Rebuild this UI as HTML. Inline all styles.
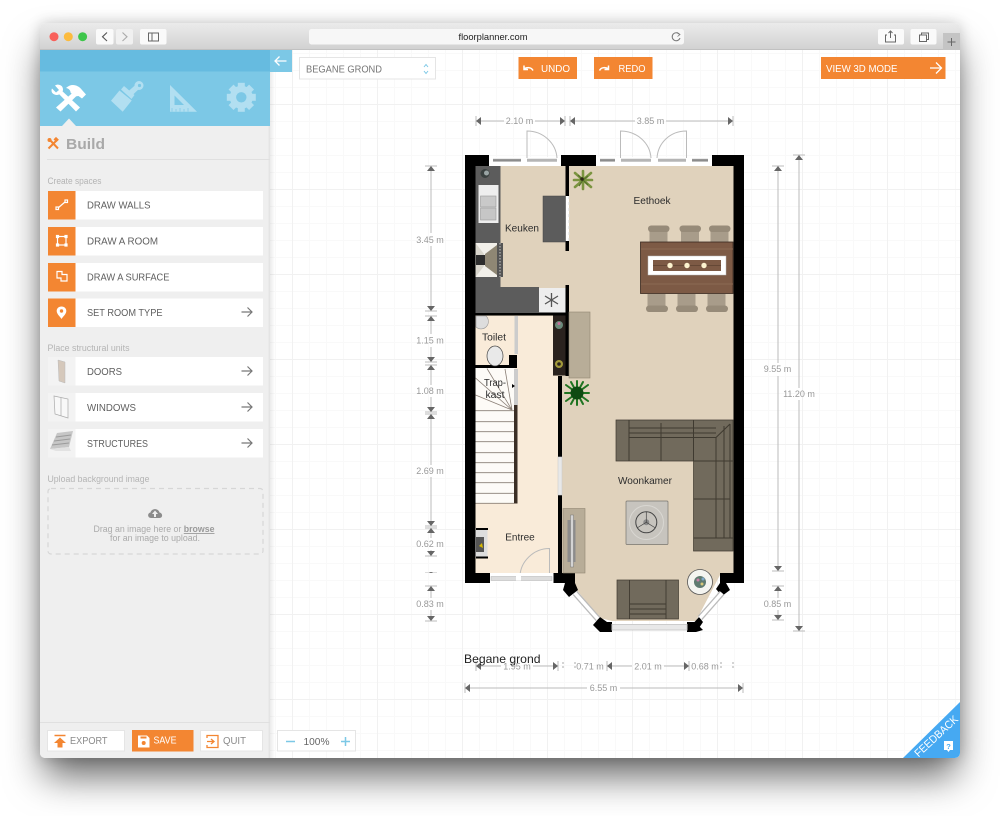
<!DOCTYPE html>
<html><head><meta charset="utf-8">
<style>
html,body{margin:0;padding:0;background:#fff;width:1000px;height:816px;overflow:hidden}
#shadow{position:absolute;left:40px;top:23px;width:920px;height:735px;border-radius:5px;box-shadow:0 22px 38px -4px rgba(0,0,0,.6),0 0 14px rgba(0,0,0,.18)}
svg{position:absolute;left:0;top:0}
text{font-family:"Liberation Sans",sans-serif}
.s{fill:#5f5f5f;font-size:10.5px}
.l{fill:#b4b4b4;font-size:9px}
.d{fill:#999;font-size:9px;text-anchor:middle}
.r{fill:#2c2c2c;font-size:10.5px;text-anchor:middle}
.w{fill:#fff;font-size:10.5px}
</style></head><body>
<div id="shadow"></div>
<svg width="1000" height="816" viewBox="0 0 1000 816" xmlns="http://www.w3.org/2000/svg">
<defs>
<clipPath id="win"><rect x="40" y="23" width="920" height="735" rx="5"/></clipPath>
<linearGradient id="tb" x1="0" y1="0" x2="0" y2="1"><stop offset="0" stop-color="#ebebeb"/><stop offset="1" stop-color="#d0d0d0"/></linearGradient>
<linearGradient id="sh" x1="0" y1="0" x2="1" y2="0"><stop offset="0" stop-color="#000" stop-opacity=".08"/><stop offset="1" stop-color="#000" stop-opacity="0"/></linearGradient>
<pattern id="minor" x="3" y="2" width="17" height="17" patternUnits="userSpaceOnUse"><path d="M.5 0V17M0 .5H17" stroke="#f9f9f9" fill="none"/></pattern>
<pattern id="major" x="37" y="19" width="85" height="85" patternUnits="userSpaceOnUse"><path d="M.5 0V85M0 .5H85" stroke="#f1f1f1" fill="none"/></pattern>
<g id="up"><path d="M-6 0H6" stroke="#bbb"/><path d="M-4 5L0 0L4 5Z" fill="#666"/></g>
<g id="dn"><path d="M-6 0H6" stroke="#bbb"/><path d="M-4 -5L0 0L4 -5Z" fill="#666"/></g>
<g id="lf"><path d="M0 -5V5" stroke="#bbb"/><path d="M5 -4L0 0L5 4Z" fill="#666"/></g>
<g id="rt"><path d="M0 -5V5" stroke="#bbb"/><path d="M-5 -4L0 0L-5 4Z" fill="#666"/></g>
<g id="arr"><path d="M0 0H10M6 -4.500L10.500 0L6 4.500" fill="none" stroke="#777" stroke-width="1.200"/></g>
<g id="chT"><rect x="1.500" y="4" width="18" height="13" fill="#a89c8a"/><rect x="0" y="0" width="21.500" height="6.500" rx="3.200" fill="#978b79"/></g>
<g id="chB"><rect x="1.500" y="0" width="18" height="13" fill="#a89c8a"/><rect x="0" y="11.500" width="22" height="6.500" rx="3.200" fill="#978b79"/></g>
</defs>

<g clip-path="url(#win)">
<!-- title bar -->
<rect x="40" y="23" width="920" height="28" fill="url(#tb)"/>
<rect x="40" y="49.500" width="920" height="1" fill="#b0b0b0"/>
<circle cx="54" cy="36.700" r="4.500" fill="#f8605a"/>
<circle cx="68.300" cy="36.700" r="4.500" fill="#fcbb3e"/>
<circle cx="82.600" cy="36.700" r="4.500" fill="#3ec64b"/>
<rect x="96" y="29" width="17.500" height="15.500" rx="2" fill="#fafafa"/>
<rect x="116" y="29" width="17" height="15.500" rx="2" fill="#f0f0f0"/>
<path d="M107 32.500L102.500 36.800L107 41" fill="none" stroke="#555" stroke-width="1.100"/>
<path d="M122.500 32.500L127 36.800L122.500 41" fill="none" stroke="#aaa" stroke-width="1.100"/>
<rect x="140" y="29" width="26.500" height="15.500" rx="2" fill="#fafafa"/>
<rect x="148.500" y="33" width="10" height="8" fill="none" stroke="#666"/><path d="M152 33V41" stroke="#666"/>
<rect x="309" y="29" width="375" height="15.500" rx="2.500" fill="#f7f7f7"/>
<text x="493" y="40" text-anchor="middle" font-size="9.500" fill="#222" textLength="69" lengthAdjust="spacingAndGlyphs">floorplanner.com</text>
<path d="M679.500 34.500A4 4 0 1 0 680 38" fill="none" stroke="#777"/><path d="M677 32.500L680 34.500L677.500 36.500" fill="none" stroke="#777" stroke-width=".8"/>
<rect x="878" y="29" width="26" height="15.500" rx="2" fill="#fafafa"/>
<path d="M887 35H885.500V42H895.500V35H894M890.500 38V31M888.500 33L890.500 31L892.500 33" fill="none" stroke="#666"/>
<rect x="910.500" y="29" width="26" height="15.500" rx="2" fill="#fafafa"/>
<rect x="919.500" y="35" width="7" height="6.500" fill="none" stroke="#666"/><path d="M921.500 35V33H928.500V39.500H926.500" fill="none" stroke="#666"/>
<rect x="943" y="33" width="17" height="17" fill="#c4c4c4"/>
<path d="M947.500 42H955.500M951.500 38V46" stroke="#666"/>

<!-- canvas -->
<rect x="270" y="50" width="690" height="708" fill="#fff"/>
<rect x="270" y="50" width="690" height="708" fill="url(#minor)"/>
<rect x="270" y="50" width="690" height="708" fill="url(#major)"/>
<rect x="270" y="50" width="5" height="708" fill="url(#sh)"/>

<!-- sidebar -->
<rect x="40" y="50" width="230" height="708" fill="#efefef"/>
<rect x="268.500" y="126" width="1.500" height="632" fill="#e4e4e4"/>
<rect x="40" y="50" width="230" height="22" fill="#66bbe0"/>
<rect x="40" y="71.500" width="230" height="54.500" fill="#7cc8e6"/>
<path d="M62 126L69 118.500L76 126Z" fill="#efefef"/>

<!-- tool icons -->
<g fill="#fff">
<path d="M57.500 92.500L60.500 89.500L80 107.500L76 111.500Z"/>
<path d="M52 88.500L56 92.500L59 90L55 85.500C58 83.500 63 85 63 89.500C63 93.500 58 96 54.500 94.500C51.500 93.500 51 90.500 52 88.500Z"/>
<path d="M74 91.500L77.500 95L60.500 111.500L56 107.500Z"/>
<path d="M66 88C71 83 78 84.500 82 90L86 94.500L82 98.500L78.500 96L74.500 96.500L70.500 92.500C70.500 90.500 69 88.500 66 88Z"/>
</g>
<g fill="#b2dff1">
<path d="M111 100.700L119.500 90.500L131.700 100.500L122.700 111.700Z"/>
<path d="M121 89.500L124 86L134.500 95L131.500 99Z"/>
<path d="M127.500 92L136.500 84L140 88L131 96.500Z"/>
<circle cx="139" cy="85.500" r="4.500"/>
<path fill-rule="evenodd" d="M170 85V111.700H197ZM174.500 95.500V105H184Z"/>
</g>
<circle cx="139.500" cy="85.500" r="1.600" fill="#7cc8e6"/>
<path d="M172 111.500V108M176 111.500V109M180 111.500V108M184 111.500V109M188 111.500V108" stroke="#7cc8e6" stroke-width=".7"/>
<g transform="translate(241.300 97.300)" fill="#b2dff1">
<circle r="11.500"/>
<rect x="-3.500" y="-14.500" width="7" height="29"/>
<rect x="-3.500" y="-14.500" width="7" height="29" transform="rotate(45)"/>
<rect x="-3.500" y="-14.500" width="7" height="29" transform="rotate(90)"/>
<rect x="-3.500" y="-14.500" width="7" height="29" transform="rotate(135)"/>
<circle r="5.200" fill="#7cc8e6"/>
</g>

<!-- build header -->
<path d="M48.500 148.500L58 139M49 139L58 148.500" stroke="#f38632" stroke-width="2" fill="none"/>
<circle cx="49.500" cy="140" r="2" fill="#f38632"/><rect x="54.500" y="137.500" width="4" height="3.500" fill="#f38632" transform="rotate(45 56 139)"/>
<text x="66" y="149" font-size="15" font-weight="bold" fill="#a9a9a9" textLength="39" lengthAdjust="spacingAndGlyphs">Build</text>
<rect x="47" y="159" width="223" height="1" fill="#e0e0e0"/>

<text x="47.500" y="184" class="l" textLength="54" lengthAdjust="spacingAndGlyphs">Create spaces</text>
<!-- buttons -->
<g fill="#fff">
<rect x="48" y="191" width="215" height="28.500"/>
<rect x="48" y="227" width="215" height="28.500"/>
<rect x="48" y="263" width="215" height="28.500"/>
<rect x="48" y="298.500" width="215" height="28.500"/>
<rect x="48" y="357" width="215" height="28.500"/>
<rect x="48" y="393" width="215" height="28.500"/>
<rect x="48" y="429" width="215" height="28.500"/>
</g>
<g fill="#f38632">
<rect x="48" y="191" width="27.500" height="28.500"/>
<rect x="48" y="227" width="27.500" height="28.500"/>
<rect x="48" y="263" width="27.500" height="28.500"/>
<rect x="48" y="298.500" width="27.500" height="28.500"/>
</g>
<g fill="none" stroke="#fff" stroke-width="1.200">
<path d="M58 208L65 202"/><rect x="56" y="207" width="2.500" height="2.500"/><rect x="65" y="200" width="2.500" height="2.500"/>
<rect x="57.500" y="236.500" width="8.500" height="8.500"/>
<rect x="56.500" y="235.500" width="2" height="2" fill="#fff"/><rect x="65" y="235.500" width="2" height="2" fill="#fff"/><rect x="56.500" y="244" width="2" height="2" fill="#fff"/><rect x="65" y="244" width="2" height="2" fill="#fff"/>
<path d="M57 271.500H62V274.500H67V281H61V278H57Z"/>
</g>
<path d="M61.500 306.500C58.500 306.500 56.700 308.500 56.700 311C56.700 314 60 316.500 61.500 319C63 316.500 66.300 314 66.300 311C66.300 308.500 64.500 306.500 61.500 306.500Z" fill="#fff"/>
<circle cx="61.500" cy="311" r="1.700" fill="#f38632"/>

<text x="87" y="208.500" class="s" textLength="63.500" lengthAdjust="spacingAndGlyphs">DRAW WALLS</text>
<text x="87" y="244.500" class="s" textLength="71" lengthAdjust="spacingAndGlyphs">DRAW A ROOM</text>
<text x="87" y="280.500" class="s" textLength="82.500" lengthAdjust="spacingAndGlyphs">DRAW A SURFACE</text>
<text x="87" y="316" class="s" textLength="75.500" lengthAdjust="spacingAndGlyphs">SET ROOM TYPE</text>
<use href="#arr" x="241.500" y="312"/>

<text x="47.500" y="351" class="l" textLength="82" lengthAdjust="spacingAndGlyphs">Place structural units</text>
<rect x="48" y="357" width="27.500" height="28.500" fill="#f3f3f3"/>
<rect x="48" y="393" width="27.500" height="28.500" fill="#f3f3f3"/>
<rect x="48" y="429" width="27.500" height="28.500" fill="#f3f3f3"/>
<path d="M58 360L65 362V383L59 381Z" fill="#d5c8bb" stroke="#bbb" stroke-width=".5"/>
<path d="M54 396L68 399V418L55 414Z" fill="#f8f8f8" stroke="#aaa" stroke-width=".7"/><path d="M61 397.500V416" stroke="#aaa" stroke-width=".7"/>
<path d="M57 433L73 431L69 447L50 449Z" fill="#c6c6c6"/><path d="M56 437L71 435M54 441L70 439M52 445L69 443" stroke="#9b9b9b"/><path d="M50 449L69 447L71 451H56Z" fill="#e2e2e2"/>
<text x="87" y="375" class="s" textLength="35" lengthAdjust="spacingAndGlyphs">DOORS</text>
<text x="87" y="411" class="s" textLength="49" lengthAdjust="spacingAndGlyphs">WINDOWS</text>
<text x="87" y="447" class="s" textLength="61" lengthAdjust="spacingAndGlyphs">STRUCTURES</text>
<use href="#arr" x="241.500" y="371"/>
<use href="#arr" x="241.500" y="407"/>
<use href="#arr" x="241.500" y="443"/>

<text x="47.500" y="482" class="l" textLength="102" lengthAdjust="spacingAndGlyphs">Upload background image</text>
<rect x="48" y="488.500" width="215" height="65.500" rx="3" fill="none" stroke="#d6d6d6" stroke-width="1.200" stroke-dasharray="5 4"/>
<path d="M151 518C147.500 518 147 513 150.500 512.500C151.500 508 158.500 508 159.500 512.500C163 513 163 518 159.500 518Z" fill="#8c8c8c"/>
<path d="M155 510.500L152 514H154V517H156V514H158Z" fill="#efefef"/>
<text x="93.500" y="532" font-size="8.800" fill="#aaa" textLength="121" lengthAdjust="spacingAndGlyphs">Drag an image here or <tspan font-weight="bold" text-decoration="underline" fill="#9a9a9a">browse</tspan></text>
<text x="110" y="541" font-size="8.800" fill="#aaa" textLength="90" lengthAdjust="spacingAndGlyphs">for an image to upload.</text>

<!-- bottom bar -->
<rect x="40" y="722" width="230" height="1" fill="#e0e0e0"/>
<rect x="47.500" y="730.500" width="77" height="20.500" fill="#fff" stroke="#e5e5e5"/>
<rect x="132" y="730" width="61.500" height="21.500" fill="#f38632"/>
<rect x="200.500" y="730.500" width="62" height="20.500" fill="#fff" stroke="#e5e5e5"/>
<path d="M54.500 735.500H65.500" stroke="#f38632" stroke-width="1.500"/>
<path d="M60 737.500L66 743H62.500V747.500H57.500V743H54Z" fill="#f38632"/>
<text x="70" y="744" class="s" style="fill:#8a8a8a" textLength="37.500" lengthAdjust="spacingAndGlyphs">EXPORT</text>
<path d="M138 735.500H147L149.500 738V747.500H138Z" fill="#fff"/>
<rect x="140.500" y="736.500" width="6" height="2" fill="#f38632"/><circle cx="143.700" cy="743" r="2" fill="#f38632"/>
<text x="153.500" y="743.500" class="w" textLength="23" lengthAdjust="spacingAndGlyphs">SAVE</text>
<path d="M207 738V735.500H218V747.500H207V745M207 741.500H213.500M211 739L214 741.500L211 744" fill="none" stroke="#f38632" stroke-width="1.300"/>
<text x="223" y="744" class="s" style="fill:#8a8a8a" textLength="23" lengthAdjust="spacingAndGlyphs">QUIT</text>

<!-- zoom -->
<rect x="277.500" y="730.500" width="78" height="20.500" fill="#fff" stroke="#e5e5e5"/>
<path d="M286 741.500H295M341 741.500H350M345.500 737V746" stroke="#7cc8e6" stroke-width="1.500"/>
<text x="316.500" y="745" font-size="10.500" fill="#666" text-anchor="middle" textLength="26" lengthAdjust="spacingAndGlyphs">100%</text>

<!-- top controls -->
<rect x="270" y="50" width="22" height="22" fill="#7cc8e6"/>
<path d="M286.500 61H275M279.500 56.500L275 61L279.500 65.500" fill="none" stroke="#fff" stroke-width="1.300"/>
<rect x="299.500" y="57.500" width="136" height="21.500" fill="#fff" stroke="#e5e5e5"/>
<text x="306" y="72.500" class="s" style="fill:#777" textLength="76" lengthAdjust="spacingAndGlyphs">BEGANE GROND</text>
<path d="M424 67L426 64.500L428 67M424 71L426 73.500L428 71" fill="none" stroke="#7cc8e6"/>
<rect x="518.500" y="57" width="58.500" height="22" fill="#f38632"/>
<rect x="594" y="57" width="58.500" height="22" fill="#f38632"/>
<rect x="821" y="57" width="124.500" height="22" fill="#f38632"/>
<path d="M533 70.500C531.500 67.500 528 67 524.500 68.500M524 65.500V69.500H528" fill="none" stroke="#fff" stroke-width="1.500"/>
<path d="M599.500 70.500C601 67.500 604.500 67 608 68.500M608.500 65.500V69.500H604.500" fill="none" stroke="#fff" stroke-width="1.500"/>
<text x="541" y="72" class="w" textLength="29" lengthAdjust="spacingAndGlyphs">UNDO</text>
<text x="618.500" y="72" class="w" textLength="27" lengthAdjust="spacingAndGlyphs">REDO</text>
<text x="826" y="72" class="w" textLength="71.500" lengthAdjust="spacingAndGlyphs">VIEW 3D MODE</text>
<path d="M930 68H941M936 62.500L941.500 68L936 73.500" fill="none" stroke="#fff" stroke-width="1.300"/>

<!-- FLOOR PLAN -->
<path d="M475 166H733.500V575H720L696 621H612L600 618L575 588L562 575V376H553V316H475Z" fill="#e0d2bc"/>
<path d="M475 316H553V376H558V576H475Z" fill="#f9ebd9"/>
<!-- windows top -->
<rect x="489" y="157" width="72" height="9" fill="#fff"/>
<rect x="596" y="157" width="116" height="9" fill="#fff"/>
<path d="M493 160.300H521M527 160.300H557M600 160.300H615M621 160.300H651M658 160.300H686M692 160.300H708" stroke="#b5b5b5" stroke-width="3"/>
<path d="M493 160.300H521M600 160.300H615M692 160.300H708" stroke="#8c8c8c" stroke-width="2"/>
<!-- door arcs -->
<path d="M527 158V131C543 131 556 143 557 158" fill="none" stroke="#bbb"/>
<path d="M620.500 158V131C637 131 650 143 651 158" fill="none" stroke="#bbb"/>
<path d="M686.500 158V131C670 131 658 143 657 158" fill="none" stroke="#bbb"/>
<path d="M549.500 576V548.500C533 548.500 520.500 562 520 576" fill="none" stroke="#bbb"/>
<!-- outer walls -->
<g fill="#000">
<rect x="465" y="155" width="24" height="11"/>
<rect x="465" y="155" width="10.500" height="428"/>
<rect x="465" y="573" width="25" height="10"/>
<rect x="561" y="155" width="35" height="11"/>
<rect x="712" y="155" width="32" height="11"/>
<rect x="733.500" y="155" width="10.500" height="428"/>
<rect x="720" y="573" width="24" height="10"/>
<rect x="565.500" y="166" width="3.500" height="30"/>
<rect x="565.500" y="241" width="3.500" height="10"/>
<rect x="565.500" y="285" width="3.500" height="30"/>
<rect x="475" y="312.500" width="94" height="3"/>
<rect x="475" y="365" width="42" height="3"/>
<rect x="509" y="355" width="8" height="12"/>
<rect x="558" y="376" width="4" height="81"/>
<rect x="558" y="495" width="4" height="78"/>
<rect x="553.500" y="573" width="21.500" height="10"/>
<path d="M562 573H575V583L578 590L569 597L563 590L565 583H562Z"/>
<path d="M600 617L607 622L612 622V632H600L593 625Z"/>
<path d="M687 622H695L703 630L696 632H687Z"/>
<path d="M699 617L703 622L697 631L690 627Z"/>
<path d="M720 573H733V583H726L730 590L722 596L716 589L720 583Z"/>
<rect x="476" y="528" width="12" height="2"/><rect x="476" y="556.500" width="12" height="2"/>
</g>
<rect x="565.500" y="196" width="3.500" height="45" fill="#fff"/>
<path d="M569 196V241" stroke="#ddd" stroke-dasharray="3 3"/>
<!-- bay windows -->
<path d="M575 593L598 619" stroke="#bbb" stroke-width="6"/><path d="M575 593L598 619" stroke="#fff" stroke-width="3.500"/>
<path d="M700 618L722 593" stroke="#bbb" stroke-width="6"/><path d="M700 618L722 593" stroke="#fff" stroke-width="3.500"/>
<rect x="612" y="624.500" width="75" height="5.500" fill="#e8e8e8" stroke="#ccc"/>
<!-- entry window -->
<rect x="490" y="573" width="63.500" height="9" fill="#fff"/>
<rect x="491" y="576.500" width="61" height="4" fill="#ddd" stroke="#bbb" stroke-width=".6"/>
<rect x="516" y="576" width="5" height="4.500" fill="#fff"/>
<!-- hall side window -->
<rect x="558" y="457" width="4" height="38" fill="#e8e8e8" stroke="#ccc" stroke-width=".6"/>
<!-- kitchen -->
<rect x="475.500" y="166" width="25" height="147" fill="#5c5c5c"/>
<rect x="500" y="287" width="39" height="26" fill="#5c5c5c"/>
<rect x="543" y="196" width="22.500" height="46" fill="#5c5c5c" stroke="#444" stroke-width=".5"/>
<circle cx="485" cy="173.500" r="4.500" fill="#39403f"/><circle cx="486.500" cy="173" r="2.500" fill="#99a4a4"/>
<rect x="478.500" y="185" width="20" height="38" fill="#eee"/>
<rect x="480.500" y="196" width="15.500" height="11" fill="#c9c9c9" stroke="#999" stroke-width=".6"/>
<rect x="480.500" y="208" width="15.500" height="12" fill="#c6c6c6" stroke="#999" stroke-width=".6"/>
<rect x="475.500" y="243" width="24" height="34" fill="#d9d6cc"/>
<path d="M475.500 243H499V277H475.500L484 266V254Z" fill="#f2f0ea"/>
<path d="M476 255H485V265H476Z" fill="#2d2d2d"/>
<path d="M485 254L497 245V275L485 266Z" fill="#8f8774"/>
<rect x="497" y="243" width="6" height="34" fill="#555"/>
<path d="M500 243V277" stroke="#ccc" stroke-dasharray="1.500 1.500"/>
<rect x="539" y="288" width="26.500" height="24.500" fill="#eeeeee"/>
<path d="M551.500 293V307M545 296L558 304M558 296L545 304" stroke="#555" stroke-width="1.300"/>
<text x="522" y="231.500" class="r" textLength="34" lengthAdjust="spacingAndGlyphs">Keuken</text>
<!-- toilet -->
<path d="M476 316H486A7 7 0 0 1 476 327Z" fill="#ddd" stroke="#999" stroke-width=".6"/>
<ellipse cx="495" cy="356" rx="8" ry="10" fill="#e9e9e9" stroke="#444" stroke-width=".7"/>
<rect x="514.500" y="316" width="3.500" height="38" fill="#ccc"/>
<text x="494" y="340.500" class="r" textLength="24" lengthAdjust="spacingAndGlyphs">Toilet</text>
<!-- stairs -->
<rect x="475.500" y="368" width="39" height="135.500" fill="#fdfbf7"/>
<g stroke="#8a7f76" stroke-width=".8" fill="none">
<path d="M475.500 410.700H514M475.500 421.700H514M475.500 431.700H514M475.500 441.700H514M475.500 452.700H514M475.500 462.700H514M475.500 472.700H514M475.500 482.700H514M475.500 493.300H514M475.500 503.300H514"/>
<path d="M512 410L475.500 378M512 410L475.500 395M512 410L487 368.500M512 410L505 369"/>
</g>
<rect x="514" y="369" width="4" height="36" fill="#ccc"/>
<rect x="514" y="405" width="3.500" height="98.500" fill="#3b2f26"/>
<path d="M512 384L515 386L512 388Z" fill="#000"/>
<text x="495" y="386" class="r" textLength="22" lengthAdjust="spacingAndGlyphs">Trap-</text>
<text x="495" y="398" class="r" textLength="19" lengthAdjust="spacingAndGlyphs">kast</text>
<!-- entree -->
<rect x="475.500" y="530" width="12" height="26.500" fill="#ddd"/>
<rect x="476" y="537" width="8" height="15" fill="#555"/>
<path d="M479 546L482 543L483 548Z" fill="#d6b800"/>
<text x="520" y="540.500" class="r" textLength="29.500" lengthAdjust="spacingAndGlyphs">Entree</text>
<!-- cupboard -->
<rect x="553" y="315.500" width="12.500" height="60" fill="#2a221e"/>
<rect x="565.500" y="315" width="3.500" height="61" fill="#000"/>
<circle cx="559" cy="325" r="4" fill="#6a8a7a"/><circle cx="559" cy="323.500" r="1.500" fill="#c86f9d"/>
<circle cx="559" cy="364" r="4" fill="#a39a3a"/><circle cx="559" cy="364" r="1.800" fill="#2a221e"/>
<rect x="569" y="312" width="21" height="66" fill="#b8ad98" stroke="#8f8672" stroke-width=".6"/>
<!-- plants -->
<g stroke="#7b9440" stroke-width="2.600" stroke-linecap="round" fill="none">
<path d="M583 180L575 173M583 180L591 173M583 180L575 187M583 180L591 187M583 180V171M583 180V189M583 180H574M583 180H592"/>
</g>
<g stroke="#55702a" stroke-width="1.200" fill="none"><path d="M583 180L578 175M583 180L588 176M583 180L579 186M583 180L588 185"/></g>
<circle cx="582" cy="179" r="1.800" fill="#2f2a18"/>
<g stroke="#1f7421" stroke-width="2" stroke-linecap="round" fill="none">
<path d="M577 393L566 385M577 393L588 385M577 393L566 401M577 393L588 401M577 393V381M577 393V405M577 393H565M577 393H589M577 393L571 382M577 393L583 382M577 393L571 404M577 393L583 404"/>
</g>
<circle cx="577" cy="393" r="6.500" fill="#0e4a12"/>
<!-- dining -->
<use href="#chT" x="648" y="225.500"/><use href="#chT" x="679.500" y="225.500"/><use href="#chT" x="709" y="225.500"/>
<use href="#chB" x="646" y="294"/><use href="#chB" x="676" y="294"/><use href="#chB" x="706" y="294"/>
<rect x="640.500" y="242" width="92.500" height="51.500" fill="#7d5a45" stroke="#3a2a20" stroke-width=".8"/>
<path d="M641 249H733M641 284H733" stroke="#8c6a54"/>
<rect x="648" y="256" width="78" height="19" fill="#fff" stroke="#bbb" stroke-width=".5"/>
<rect x="653" y="260" width="68" height="11" fill="#7d5a45"/>
<path d="M653 265.500H721" stroke="#4e3628" stroke-width=".6"/>
<circle cx="670" cy="265.500" r="2.700" fill="#fdf3cf"/><circle cx="687" cy="265.500" r="2.700" fill="#fdf3cf"/><circle cx="704" cy="265.500" r="2.700" fill="#fdf3cf"/>
<text x="652" y="204" class="r" textLength="37" lengthAdjust="spacingAndGlyphs">Eethoek</text>
<!-- sofa -->
<path d="M616 420H733V551H693.500V461H616Z" fill="#716a5c" stroke="#3f3a30" stroke-width=".7"/>
<path d="M629 420V461M661 423V461M693.500 420V461M629 428H716M629 433H716M629 437.500H716M716 437.500V538M724 426V538M730 424V538M693.500 461H733M693.500 499H730M693.500 538H733M716 437.500L730 424" stroke="#3f3a30" stroke-width="1" fill="none"/>
<text x="645" y="484" class="r" textLength="54" lengthAdjust="spacingAndGlyphs">Woonkamer</text>
<!-- coffee table -->
<rect x="626" y="501" width="42" height="43.500" rx="1" fill="#c7c4be" stroke="#77746e" stroke-width=".7"/>
<circle cx="646.500" cy="522.500" r="17" fill="none" stroke="#d9d7d2"/>
<circle cx="646.300" cy="522.300" r="10.500" fill="none" stroke="#444" stroke-width="1"/>
<circle cx="646.300" cy="522.300" r="3" fill="#8b8b8b"/>
<path d="M646.300 522.300V512M646.300 522.300L637 528M646.300 522.300L655.500 528" stroke="#444" stroke-width=".7"/>
<!-- armchair -->
<rect x="617" y="580" width="61.500" height="39" fill="#716a5c" stroke="#3f3a30" stroke-width=".7"/>
<path d="M629.500 580V619M666 580V619M630 604H666M630 609H666M630 614H666" stroke="#3f3a30" stroke-width=".9" fill="none"/>
<!-- round table -->
<circle cx="700" cy="582" r="12.500" fill="#f4f4f0" stroke="#555" stroke-width=".8"/>
<circle cx="700" cy="582" r="6" fill="#5f7a70"/>
<circle cx="698" cy="580" r="1.500" fill="#c87fa8"/><circle cx="702" cy="584" r="1.500" fill="#d8c97a"/><circle cx="703" cy="579" r="1.500" fill="#7fa8c8"/>
<!-- tv -->
<rect x="563" y="508.500" width="22" height="64.500" fill="#b8ad98" stroke="#8f8672" stroke-width=".6"/>
<rect x="567.500" y="520" width="8" height="42" fill="#8c8c8c"/>
<rect x="570.500" y="515" width="3" height="52" fill="#d4d4d4" stroke="#666" stroke-width=".4"/>

<!-- DIMENSIONS -->
<g stroke="#bbb" fill="none">
<path d="M476 121H504M535 121H565M570 121H635M666 121H733"/>
<path d="M431 166V233M431 246V310M431 316V334M431 347V361M431 365V385M431 397V411M431 415V465M431 477V525M431 529V538M431 550V556M431 586V598M431 610V620"/>
<path d="M778 166V363M778 376V571M778 586V598M778 610V619"/>
<path d="M799 155V388M799 400V631"/>
<path d="M476 666H501M533 666H558M607 666H632M664 666H689M465 688H587M620 688H743"/>
</g>
<use href="#lf" x="476" y="121"/><use href="#rt" x="565" y="121"/><use href="#lf" x="570" y="121"/><use href="#rt" x="733" y="121"/>
<use href="#up" x="431" y="166"/><use href="#dn" x="431" y="311"/><use href="#up" x="431" y="316"/><use href="#dn" x="431" y="362"/><use href="#up" x="431" y="365"/><use href="#dn" x="431" y="412"/><use href="#up" x="431" y="414"/><use href="#dn" x="431" y="526"/><use href="#up" x="431" y="528"/><use href="#dn" x="431" y="556"/><use href="#up" x="431" y="586"/><use href="#dn" x="431" y="621"/>
<path d="M425 572.500H437" stroke="#ddd"/><path d="M429.500 572.500H432.500" stroke="#777"/>
<use href="#up" x="778" y="166"/><use href="#dn" x="778" y="571"/><use href="#up" x="778" y="586"/><use href="#dn" x="778" y="620"/>
<use href="#up" x="799" y="155"/><use href="#dn" x="799" y="631"/>
<use href="#lf" x="476" y="666"/><use href="#rt" x="558" y="666"/><use href="#lf" x="607" y="666"/><use href="#rt" x="689" y="666"/><use href="#lf" x="465" y="688"/><use href="#rt" x="743" y="688"/>
<path d="M563 662V670M575 662V670M721 662V670M733 662V670" stroke="#aaa" stroke-dasharray="2 2"/>
<text class="d" x="519.500" y="124">2.10 m</text>
<text class="d" x="650.500" y="124">3.85 m</text>
<text class="d" x="430" y="243">3.45 m</text>
<text class="d" x="430" y="343.500">1.15 m</text>
<text class="d" x="430" y="394">1.08 m</text>
<text class="d" x="430" y="474">2.69 m</text>
<text class="d" x="430" y="547">0.62 m</text>
<text class="d" x="430" y="607">0.83 m</text>
<text class="d" x="777.500" y="372">9.55 m</text>
<text class="d" x="799" y="397">11.20 m</text>
<text class="d" x="777.500" y="607">0.85 m</text>
<text class="d" x="517" y="669.500">1.95 m</text>
<text class="d" x="590" y="669.500">0.71 m</text>
<text class="d" x="648" y="669.500">2.01 m</text>
<text class="d" x="705" y="669.500">0.68 m</text>
<text class="d" x="603.500" y="691">6.55 m</text>
<text x="464" y="663" font-size="12" fill="#222" textLength="76.500" lengthAdjust="spacingAndGlyphs">Begane grond</text>

<!-- feedback -->
<path d="M960 702V758H903Z" fill="#46a9f2"/>
<text x="936" y="740" transform="rotate(-43 936 736)" font-size="11" fill="#fff" text-anchor="middle" textLength="55" lengthAdjust="spacingAndGlyphs">FEEDBACK</text>
<path d="M944 741H953V750H950L948.500 752L947 750H944Z" fill="#fff"/>
<text x="948.500" y="749" font-size="7.500" font-weight="bold" fill="#46a9f2" text-anchor="middle">?</text>
</g>
</svg>
</body></html>
